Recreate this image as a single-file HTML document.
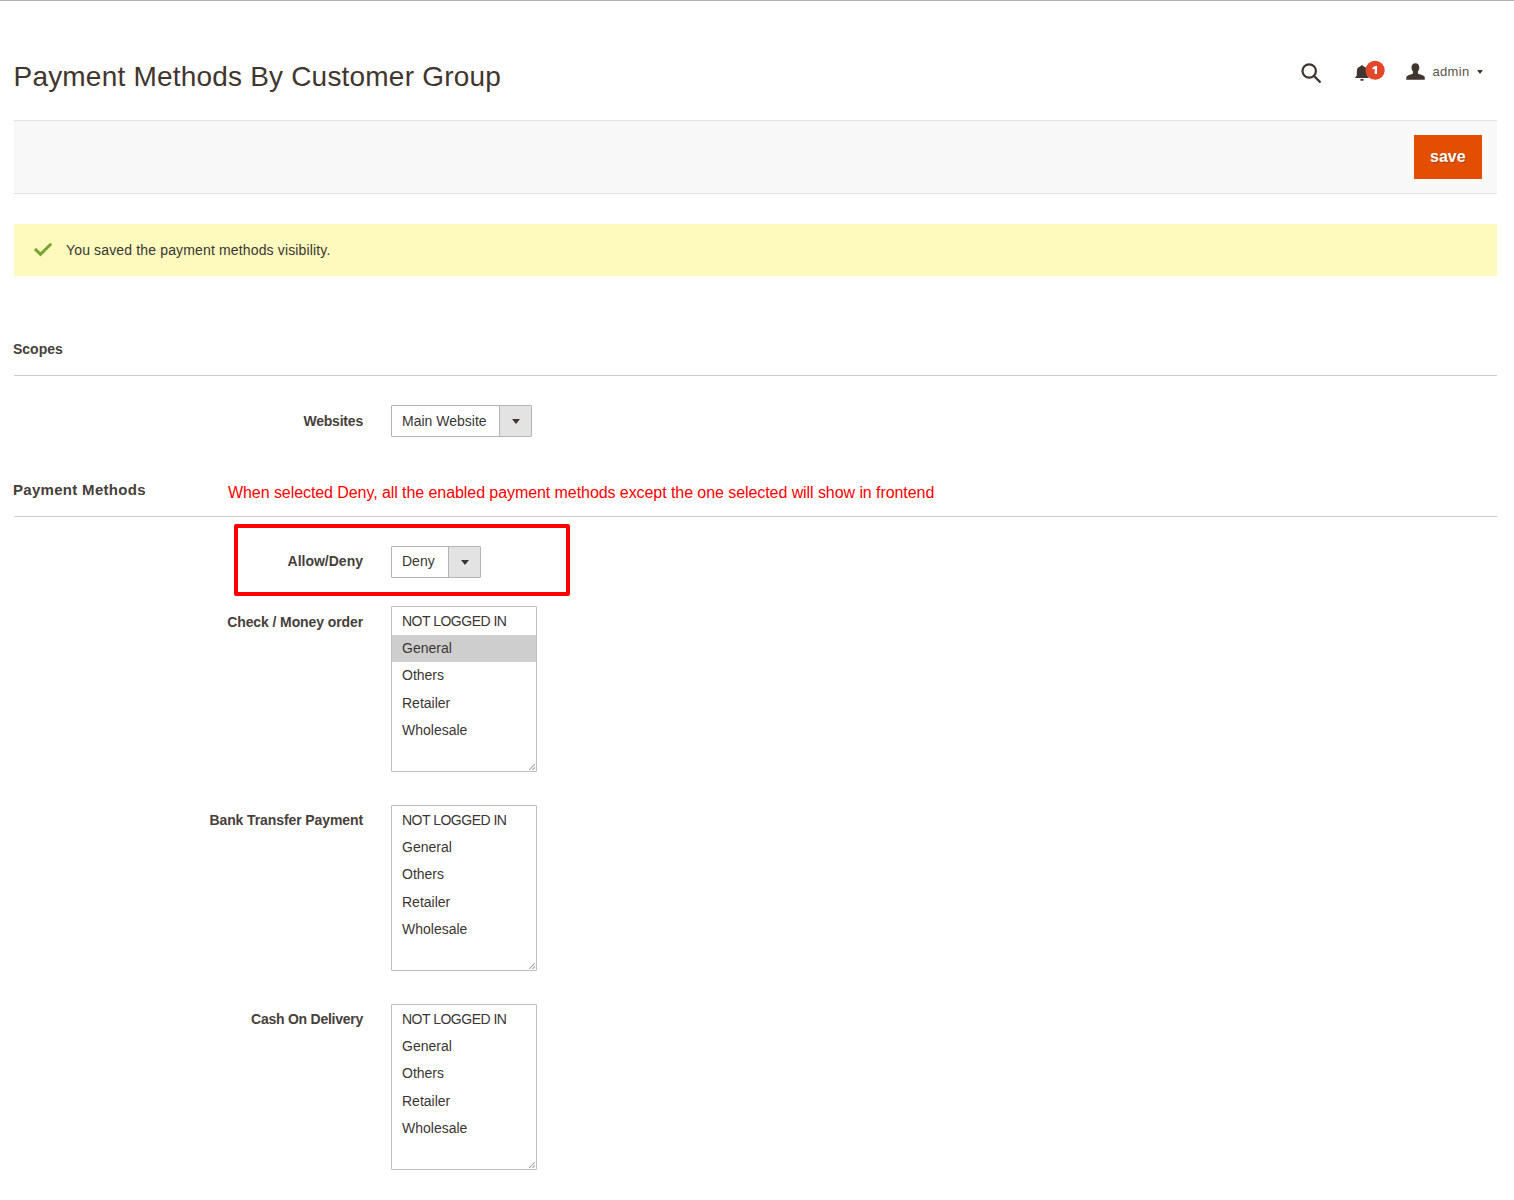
<!DOCTYPE html>
<html><head><meta charset="utf-8">
<style>
html,body{margin:0;padding:0;background:#fff;width:1514px;height:1200px;overflow:hidden;position:relative;font-family:"Liberation Sans",sans-serif;color:#303030}
.a{position:absolute}
.t{position:absolute;white-space:nowrap;line-height:normal}
.lbl{position:absolute;white-space:nowrap;line-height:normal;font-weight:bold;font-size:14px;color:#46403b;text-align:right}
.sel{position:absolute;height:30px;border:1px solid #b4b4b4;border-radius:1px;background:#fff;box-sizing:content-box}
.sel .v{position:absolute;left:10px;top:6px;font-size:14px;white-space:nowrap;color:#3a3633}
.sel .btn{position:absolute;top:0;right:0;bottom:0;background:#e3e3e3;border-left:1px solid #b4b4b4}
.tri{position:absolute;width:0;height:0;border-left:4px solid transparent;border-right:4px solid transparent;border-top:5px solid #41362f}
.ms{position:absolute;left:391px;width:144px;height:164px;border:1px solid #bebebe;border-radius:1px;background:#fff}
.ms .o{position:absolute;left:0;right:0;height:27.3px;font-size:14px;white-space:nowrap;color:#3a3633}
.ms .o span{position:absolute;left:10px;top:5px}
.grip{position:absolute;right:1px;bottom:1px;width:10px;height:10px}
</style></head>
<body>
<!-- top border -->
<div class="a" style="left:0;top:0;width:1514px;height:1px;background:#b0b0b0"></div>

<!-- title -->
<div class="t" id="title" style="left:13.5px;top:61px;font-size:28px;color:#41362f;letter-spacing:0.2px">Payment Methods By Customer Group</div>

<!-- header icons -->
<svg class="a" style="left:1296px;top:58px" width="30" height="30" viewBox="0 0 30 30">
  <circle cx="13.2" cy="13" r="6.7" fill="none" stroke="#41362f" stroke-width="2.2"/>
  <line x1="18" y1="18" x2="24.5" y2="24.5" stroke="#41362f" stroke-width="2.4"/>
</svg>
<svg class="a" style="left:1350px;top:56px" width="40" height="30" viewBox="0 0 40 30">
  <path d="M12 8.9 C12.8 9.5 13.6 10.3 14.8 10.9 C16.3 11.6 16.9 12.6 17.1 14.5 L17.3 19.5 L19 22.1 L5 22.1 L6.7 19.5 L6.9 14.5 C7.1 12.6 7.7 11.6 9.2 10.9 C10.4 10.3 11.2 9.5 12 8.9 Z" fill="#41362f"/>
  <rect x="10.3" y="23.1" width="3.4" height="1.6" rx="0.6" fill="#41362f"/>
  <circle cx="25.1" cy="14.25" r="9.6" fill="#e3472a"/>
  <path d="M24.7 9.9 L27 9.9 L27 18 L24.7 18 L24.7 12.6 L22.8 13.6 L22.2 12.3 Z" fill="#fff"/>
</svg>
<svg class="a" style="left:1404px;top:60px" width="24" height="22" viewBox="0 0 24 22">
  <path d="M11.4 3.2 C14 3.2 15.3 4.8 15.3 7.5 C15.3 9.5 14.6 10.8 13.9 11.5 L13.9 13.6 C15.6 14.6 19 15.3 20.5 16.4 C20.8 16.8 20.8 18 20.8 19.7 L2.3 19.7 C2.3 18 2.3 16.8 2.6 16.4 C4 15.3 7.3 14.6 9 13.6 L9 11.5 C8.3 10.8 7.5 9.5 7.5 7.5 C7.5 4.8 8.8 3.2 11.4 3.2 Z" fill="#41362f"/>
</svg>
<div class="t" style="left:1432.5px;top:64px;font-size:13px;color:#5a524c;letter-spacing:0.3px">admin</div>
<div class="tri" style="left:1477px;top:70px;border-left-width:3.5px;border-right-width:3.5px;border-top-width:4px"></div>

<!-- page actions bar -->
<div class="a" style="left:14px;top:120px;width:1483px;height:72px;background:#f8f8f8;border-top:1px solid #e3e3e3;border-bottom:1px solid #e3e3e3"></div>
<div class="a" style="left:1414px;top:135px;width:68px;height:44px;background:#e44e02"></div>
<div class="t" style="left:1430px;top:148px;font-size:16px;font-weight:bold;color:#fff;text-shadow:1px 1px 0 rgba(0,0,0,0.25)">save</div>

<!-- message -->
<div class="a" style="left:14px;top:224px;width:1483px;height:52px;background:#fef9bc"></div>
<svg class="a" style="left:30px;top:238px" width="26" height="22" viewBox="0 0 26 22">
  <path d="M5 10.9 L10.5 16.4 L21.2 5.7" fill="none" stroke="#79a22e" stroke-width="2.9"/>
</svg>
<div class="t" id="msg" style="left:66px;top:242px;font-size:14px;color:#3a3633;letter-spacing:0.15px">You saved the payment methods visibility.</div>

<!-- Scopes -->
<div class="t" style="left:13px;top:341px;font-size:14px;font-weight:bold;color:#46403b">Scopes</div>
<div class="a" style="left:14px;top:375px;width:1483px;height:1px;background:#cccccc"></div>

<div class="lbl" style="right:1151px;top:413px;letter-spacing:-0.2px">Websites</div>
<div class="sel" style="left:391px;top:405px;width:139px">
  <div class="v" style="top:7px">Main Website</div>
  <div class="btn" style="width:31px"><div class="tri" style="left:12px;top:13px"></div></div>
</div>

<!-- Payment Methods -->
<div class="t" style="left:13px;top:481px;font-size:15px;font-weight:bold;color:#46403b;letter-spacing:0.3px">Payment Methods</div>
<div class="t" style="left:228px;top:484px;font-size:16px;color:#ff0000;letter-spacing:-0.07px">When selected Deny, all the enabled payment methods except the one selected will show in frontend</div>
<div class="a" style="left:14px;top:516px;width:1483px;height:1px;background:#cccccc"></div>

<!-- red box -->
<div class="a" style="left:234px;top:524px;width:328px;height:64px;border:4px solid #ff0000;border-radius:2px"></div>

<div class="lbl" style="right:1151px;top:553px">Allow/Deny</div>
<div class="sel" style="left:391px;top:546px;width:88px">
  <div class="v">Deny</div>
  <div class="btn" style="width:31px"><div class="tri" style="left:12px;top:13px"></div></div>
</div>

<!-- Check / Money order -->
<div class="lbl" style="right:1151px;top:614px;letter-spacing:-0.1px">Check / Money order</div>
<div class="ms" style="top:606px">
  <div class="o" style="top:0.8px"><span style="letter-spacing:-0.5px">NOT LOGGED IN</span></div>
  <div class="o" style="top:28.1px;background:#cecece"><span>General</span></div>
  <div class="o" style="top:55.4px"><span>Others</span></div>
  <div class="o" style="top:82.7px"><span>Retailer</span></div>
  <div class="o" style="top:110px"><span>Wholesale</span></div>
  <svg class="a" style="left:130px;top:150px" width="14" height="14" viewBox="0 0 14 14"><path d="M7.2 12.9 L12.9 7.2 M10.4 13 L13 10.4" stroke="#a8a8a8" stroke-width="1.1" fill="none"/></svg>
</div>

<!-- Bank Transfer -->
<div class="lbl" style="right:1151px;top:812px;letter-spacing:-0.1px">Bank Transfer Payment</div>
<div class="ms" style="top:805px">
  <div class="o" style="top:0.8px"><span style="letter-spacing:-0.5px">NOT LOGGED IN</span></div>
  <div class="o" style="top:28.1px"><span>General</span></div>
  <div class="o" style="top:55.4px"><span>Others</span></div>
  <div class="o" style="top:82.7px"><span>Retailer</span></div>
  <div class="o" style="top:110px"><span>Wholesale</span></div>
  <svg class="a" style="left:130px;top:150px" width="14" height="14" viewBox="0 0 14 14"><path d="M7.2 12.9 L12.9 7.2 M10.4 13 L13 10.4" stroke="#a8a8a8" stroke-width="1.1" fill="none"/></svg>
</div>

<!-- Cash On Delivery -->
<div class="lbl" style="right:1151px;top:1011px;letter-spacing:-0.25px">Cash On Delivery</div>
<div class="ms" style="top:1004px">
  <div class="o" style="top:0.8px"><span style="letter-spacing:-0.5px">NOT LOGGED IN</span></div>
  <div class="o" style="top:28.1px"><span>General</span></div>
  <div class="o" style="top:55.4px"><span>Others</span></div>
  <div class="o" style="top:82.7px"><span>Retailer</span></div>
  <div class="o" style="top:110px"><span>Wholesale</span></div>
  <svg class="a" style="left:130px;top:150px" width="14" height="14" viewBox="0 0 14 14"><path d="M7.2 12.9 L12.9 7.2 M10.4 13 L13 10.4" stroke="#a8a8a8" stroke-width="1.1" fill="none"/></svg>
</div>

</body></html>
